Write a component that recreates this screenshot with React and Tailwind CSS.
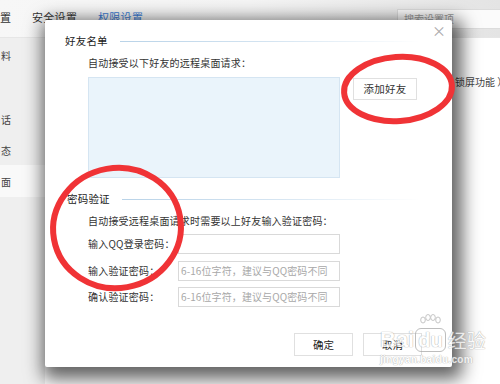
import React from "react";

const font = { fontFamily: '"Noto Sans CJK SC", "Noto Sans", sans-serif' };

function SectionHeader({ title, indent }) {
  return (
    <div className={`flex items-center h-[14px] ${indent}`}>
      <span className="text-[10.5px] leading-[14px] text-[#222] tracking-[0.2px] whitespace-nowrap">{title}</span>
      <div className="flex-1 h-px ml-[12px] mr-[32px] bg-gradient-to-r from-[#b9d3e8] via-[#d4e4f1] to-[#ffffff]" />
    </div>
  );
}

function InputRow({ label, placeholder, mt }) {
  return (
    <div className={`flex items-center ${mt}`}>
      <span className="w-[90px] text-[10px] leading-[14px] text-[#333] tracking-[0.2px] whitespace-nowrap">{label}</span>
      <div className="w-[162px] h-[20px] border border-[#d9d9d9] bg-white flex items-center pl-[2px]">
        {placeholder && (
          <span className="text-[10px] leading-[14px] text-[#a8a8a8] whitespace-nowrap tracking-[0.1px]">{placeholder}</span>
        )}
      </div>
    </div>
  );
}

export default function App() {
  return (
    <div className="relative w-[500px] h-[384px] overflow-hidden bg-white" style={font}>
      {/* background settings window */}
      <div className="flex flex-col w-full h-full">
        <div className="h-[38px] flex items-center relative bg-gradient-to-r from-[#f7f7f7] via-[#f4f4f4] to-[#e4e4e4] border-b border-[#e6e6e6]">
          <span className="absolute left-[0px] top-[10px] text-[11px] leading-[14px] text-[#333]">置</span>
          <span className="absolute left-[32px] top-[10px] text-[11px] leading-[14px] text-[#333] tracking-[0.3px]">安全设置</span>
          <span className="absolute left-[98px] top-[10px] text-[11px] leading-[14px] text-[#3b7bd4] tracking-[0.3px]">权限设置</span>
          <div className="absolute left-[397px] top-[9px] w-[110px] h-[20px] border border-[#dcdcdc] bg-[#fbfbfb] flex items-center pl-[6px]">
            <span className="text-[10px] leading-[14px] text-[#9a9a9a]">搜索设置项</span>
          </div>
        </div>
        <div className="flex flex-1">
          <div className="w-[45px] bg-[#efefef] flex flex-col text-[10px] text-[#444]">
            <div className="h-[34px] pt-[10px] pl-[1px]">料</div>
            <div className="h-[31px]" />
            <div className="h-[31px] pt-[9px] pl-[1px]">话</div>
            <div className="h-[31px] pt-[9px] pl-[1px]">态</div>
            <div className="h-[32px] pt-[9px] pl-[1px] bg-[#f9f9f9]">面</div>
          </div>
          <div className="flex-1 bg-white relative">
            <span className="absolute left-[410px] top-[36px] text-[10px] text-[#444] whitespace-nowrap">锁屏功能 ）</span>
          </div>
        </div>
      </div>

      {/* modal dialog */}
      <div className="absolute left-[45px] top-[20px] w-[407px] h-[347px] bg-white rounded-[2px] shadow-[4px_6px_18px_6px_rgba(0,0,0,0.62)] flex flex-col pt-[14px]">
        <span className="absolute right-[6px] top-[3px] text-[14px] leading-[14px] text-[#aaa]">×</span>

        <SectionHeader title="好友名单" indent="pl-[20px]" />
        <div className="mt-[8px] pl-[43px] text-[10px] leading-[14px] text-[#333] tracking-[0.2px]">自动接受以下好友的远程桌面请求：</div>
        <div className="mt-[7px] pl-[43px] flex items-start">
          <div className="w-[252px] h-[101px] bg-[#eaf4fb] border border-[#d5e5f2]" />
          <div className="ml-[13px] mt-[1px] w-[64px] h-[22px] border border-[#e0e0e0] bg-white flex items-center justify-center text-[10.5px] text-[#333] tracking-[0.2px]">添加好友</div>
        </div>

        <div className="mt-[14px]">
          <SectionHeader title="密码验证" indent="pl-[22px]" />
        </div>
        <div className="mt-[8px] pl-[43px] text-[10px] leading-[14px] text-[#333] tracking-[0.2px] whitespace-nowrap">自动接受远程桌面请求时需要以上好友输入验证密码：</div>
        <div className="pl-[43px] flex flex-col">
          <InputRow label="输入QQ登录密码：" mt="mt-[6px]" />
          <InputRow label="输入验证密码：" placeholder="6-16位字符，建议与QQ密码不同" mt="mt-[7px]" />
          <InputRow label="确认验证密码：" placeholder="6-16位字符，建议与QQ密码不同" mt="mt-[6px]" />
        </div>

        <div className="mt-[26px] flex pl-[249px] gap-[10px]">
          <div className="w-[59px] h-[23px] border border-[#e0e0e0] bg-white flex items-center justify-center text-[10.5px] text-[#222]">确定</div>
          <div className="w-[59px] h-[23px] border border-[#e0e0e0] bg-white flex items-center justify-center text-[10.5px] text-[#222]">取消</div>
        </div>
      </div>

      {/* red annotation circles */}
      <svg className="absolute left-0 top-0 pointer-events-none" width="500" height="384" viewBox="0 0 500 384">
        <ellipse cx="398" cy="89" rx="54" ry="32" fill="none" stroke="#f03336" strokeWidth="6" transform="rotate(-4 398 89)" />
        <ellipse cx="117" cy="228" rx="64" ry="60" fill="none" stroke="#f03336" strokeWidth="6" transform="rotate(-10 117 228)" />
      </svg>

      {/* watermark */}
      <div className="absolute left-[380px] top-[328px] flex flex-col items-start opacity-75 pointer-events-none">
        <div className="flex items-end">
          <span className="text-[22px] leading-[24px] font-bold text-white [text-shadow:0_0_1px_#9a9a9a,0_0_1px_#9a9a9a]" style={{ fontFamily: '"Liberation Sans", sans-serif' }}>Bai</span>
          <div className="relative">
            <svg className="absolute left-[4px] -top-[14px]" width="24" height="16" viewBox="0 0 24 16">
              <g fill="#fff" stroke="#a0a0a0" strokeWidth="0.8">
                <ellipse cx="5" cy="6" rx="2.3" ry="3" />
                <ellipse cx="10" cy="3.5" rx="2.3" ry="3" />
                <ellipse cx="15" cy="3.5" rx="2.3" ry="3" />
                <ellipse cx="20" cy="6" rx="2.3" ry="3" />
              </g>
            </svg>
            <span className="ml-[1px] px-[2px] rounded-[6px] border border-[#a8a8a8] text-[20px] leading-[22px] font-bold text-white [text-shadow:0_0_1px_#9a9a9a,0_0_1px_#9a9a9a]" style={{ fontFamily: '"Liberation Sans", sans-serif' }}>du</span>
          </div>
          <span className="ml-[2px] text-[19px] leading-[24px] text-white [text-shadow:0_0_1px_#9a9a9a,0_0_1px_#9a9a9a]">经验</span>
        </div>
        <span className="mt-[2px] text-[10px] leading-[12px] font-bold text-white tracking-[0.3px] [text-shadow:0_0_1px_#a0a0a0,0_0_1px_#a0a0a0]" style={{ fontFamily: '"Liberation Sans", sans-serif' }}>jingyan.baidu.com</span>
      </div>
    </div>
  );
}
